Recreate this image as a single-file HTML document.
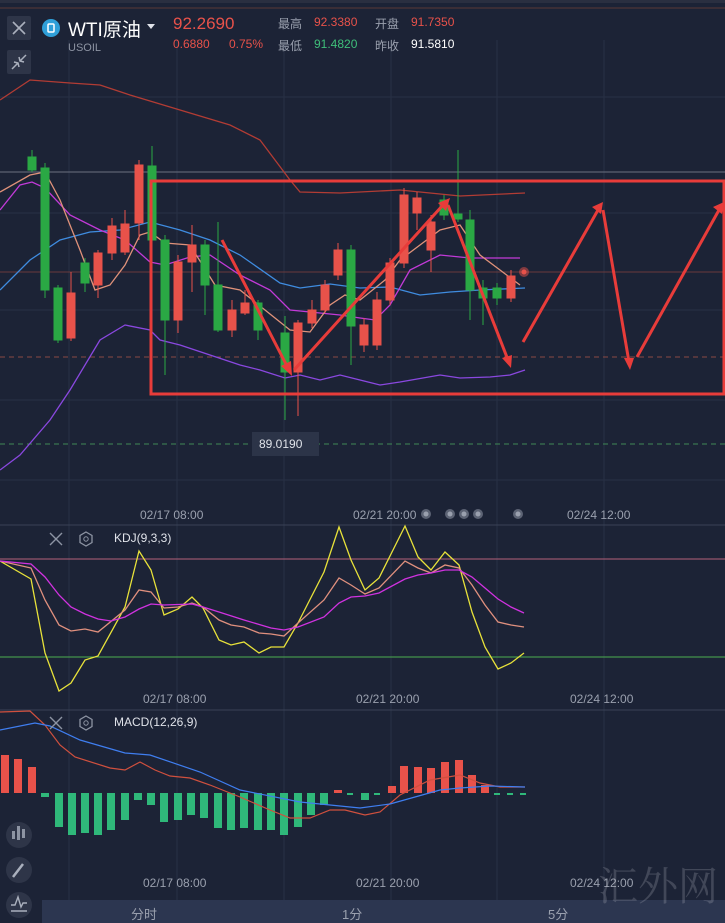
<!DOCTYPE html>
<html><head><meta charset="utf-8"><style>
html,body{margin:0;padding:0;background:#1c2336;width:725px;height:923px;overflow:hidden;font-family:"Liberation Sans","Noto Sans CJK SC",sans-serif}
.t{position:absolute;white-space:nowrap}
</style></head><body>
<svg width="725" height="923" style="position:absolute;left:0;top:0" xmlns="http://www.w3.org/2000/svg">
<rect width="725" height="923" fill="#1c2336"/>
<rect x="0" y="0" width="725" height="3" fill="#2a2f40"/>
<line x1="0" y1="8" x2="725" y2="8" stroke="#5a3a36" stroke-width="1"/>
<!-- grid -->
<g stroke="#283045" stroke-width="1">
<line x1="69" y1="40" x2="69" y2="900"/><line x1="177" y1="40" x2="177" y2="900"/><line x1="284" y1="40" x2="284" y2="900"/><line x1="391" y1="40" x2="391" y2="900"/><line x1="497" y1="40" x2="497" y2="900"/><line x1="604" y1="40" x2="604" y2="900"/>
<line x1="0" y1="97" x2="725" y2="97"/><line x1="0" y1="213" x2="725" y2="213"/><line x1="0" y1="310" x2="725" y2="310"/><line x1="0" y1="400" x2="725" y2="400"/><line x1="0" y1="480" x2="725" y2="480"/>
</g>
<line x1="0" y1="172" x2="725" y2="172" stroke="#6b7080" stroke-width="1"/>
<line x1="0" y1="272" x2="725" y2="272" stroke="#6a3a3c" stroke-width="1"/>
<line x1="0" y1="357" x2="725" y2="357" stroke="#8a4a44" stroke-width="1" stroke-dasharray="5,4"/>
<line x1="0" y1="444" x2="725" y2="444" stroke="#3f8a55" stroke-width="1" stroke-dasharray="5,4"/>
<line x1="0" y1="525" x2="725" y2="525" stroke="#3a4256"/>
<line x1="0" y1="710" x2="725" y2="710" stroke="#3a4256"/>
<!-- bands -->
<g fill="none" stroke-width="1.3">
<polyline stroke="#b23c34" points="0,100 30,80 70,83 100,85 130,95 180,110 230,125 260,140 290,180 300,192 340,193 400,190 460,196 525,193"/>
<polyline stroke="#8a48e0" points="0,470 20,455 50,420 70,390 100,340 125,325 150,330 160,340 180,345 210,355 240,365 260,370 285,378 300,375 320,380 340,375 360,380 380,385 400,382 440,375 460,378 490,377 510,375 525,370"/>
<polyline stroke="#3f8ce0" points="0,290 30,260 60,240 90,232 120,230 150,222 180,230 210,240 240,255 280,283 300,288 330,284 360,288 390,287 420,295 450,292 480,290 525,288"/>
<polyline stroke="#c23ad8" points="0,210 20,185 32,182 45,188 70,215 100,230 125,240 150,262 165,265 190,257 210,255 240,275 270,290 290,310 310,312 340,315 360,318 375,320 390,305 410,270 440,255 470,258 500,258 520,258"/>
<polyline stroke="#e0927a" points="0,192 30,175 45,172 60,200 80,250 95,290 110,285 125,265 140,235 150,232 165,243 190,245 215,285 240,290 265,310 290,330 310,332 330,305 345,295 360,300 385,280 400,260 420,245 440,230 460,225 480,255 500,270 520,285"/>
</g>
<!-- candles -->
<g stroke-width="1">
<g fill="#2aa844" stroke="#2aa844">
<line x1="32" y1="150" x2="32" y2="172"/><rect x="28" y="157" width="8" height="13"/>
<line x1="45" y1="163" x2="45" y2="298"/><rect x="41" y="168" width="8" height="122"/>
<line x1="58" y1="285" x2="58" y2="343"/><rect x="54" y="288" width="8" height="52"/>
<line x1="85" y1="258" x2="85" y2="292"/><rect x="81" y="263" width="8" height="20"/>
<line x1="152" y1="146" x2="152" y2="240"/><rect x="148" y="166" width="8" height="74"/>
<line x1="165" y1="235" x2="165" y2="375"/><rect x="161" y="240" width="8" height="80"/>
<line x1="205" y1="240" x2="205" y2="315"/><rect x="201" y="245" width="8" height="40"/>
<line x1="218" y1="222" x2="218" y2="332"/><rect x="214" y="285" width="8" height="45"/>
<line x1="258" y1="300" x2="258" y2="340"/><rect x="254" y="303" width="8" height="27"/>
<line x1="285" y1="316" x2="285" y2="420"/><rect x="281" y="333" width="8" height="39"/>
<line x1="351" y1="245" x2="351" y2="365"/><rect x="347" y="250" width="8" height="76"/>
<line x1="444" y1="195" x2="444" y2="220"/><rect x="440" y="200" width="8" height="15"/>
<line x1="458" y1="150" x2="458" y2="222"/><rect x="454" y="214" width="8" height="5"/>
<line x1="470" y1="210" x2="470" y2="320"/><rect x="466" y="220" width="8" height="70"/>
<line x1="483" y1="280" x2="483" y2="325"/><rect x="479" y="288" width="8" height="10"/>
<line x1="497" y1="283" x2="497" y2="305"/><rect x="493" y="288" width="8" height="10"/>
</g>
<g fill="#e8524a" stroke="#e8524a">
<line x1="71" y1="272" x2="71" y2="341"/><rect x="67" y="293" width="8" height="45"/>
<line x1="98" y1="250" x2="98" y2="298"/><rect x="94" y="253" width="8" height="32"/>
<line x1="112" y1="218" x2="112" y2="260"/><rect x="108" y="226" width="8" height="27"/>
<line x1="125" y1="210" x2="125" y2="255"/><rect x="121" y="224" width="8" height="28"/>
<line x1="139" y1="160" x2="139" y2="240"/><rect x="135" y="165" width="8" height="58"/>
<line x1="178" y1="255" x2="178" y2="333"/><rect x="174" y="262" width="8" height="58"/>
<line x1="192" y1="225" x2="192" y2="292"/><rect x="188" y="245" width="8" height="17"/>
<line x1="232" y1="300" x2="232" y2="337"/><rect x="228" y="310" width="8" height="20"/>
<line x1="245" y1="290" x2="245" y2="315"/><rect x="241" y="303" width="8" height="10"/>
<line x1="298" y1="320" x2="298" y2="416"/><rect x="294" y="323" width="8" height="49"/>
<line x1="312" y1="300" x2="312" y2="328"/><rect x="308" y="310" width="8" height="13"/>
<line x1="325" y1="280" x2="325" y2="313"/><rect x="321" y="285" width="8" height="25"/>
<line x1="338" y1="243" x2="338" y2="280"/><rect x="334" y="250" width="8" height="25"/>
<line x1="364" y1="318" x2="364" y2="352"/><rect x="360" y="325" width="8" height="20"/>
<line x1="377" y1="292" x2="377" y2="350"/><rect x="373" y="300" width="8" height="45"/>
<line x1="390" y1="258" x2="390" y2="305"/><rect x="386" y="263" width="8" height="37"/>
<line x1="404" y1="188" x2="404" y2="268"/><rect x="400" y="195" width="8" height="68"/>
<line x1="417" y1="192" x2="417" y2="230"/><rect x="413" y="198" width="8" height="15"/>
<line x1="431" y1="215" x2="431" y2="272"/><rect x="427" y="222" width="8" height="28"/>
<line x1="511" y1="270" x2="511" y2="302"/><rect x="507" y="276" width="8" height="22"/>
</g>
</g>
<circle cx="524" cy="272" r="5" fill="#e8524a" opacity="0.5"/><circle cx="524" cy="272" r="2.5" fill="#e8524a"/>
<!-- red box & arrows -->
<rect x="151" y="181" width="573" height="213" fill="none" stroke="#e83c3a" stroke-width="3"/>
<g stroke="#e83c3a" stroke-width="3" fill="none">
<line x1="222" y1="240" x2="288" y2="368"/>
<line x1="294" y1="370" x2="443" y2="205"/>
<line x1="448" y1="205" x2="508" y2="360"/>
<line x1="523" y1="342" x2="598" y2="210"/>
<line x1="603" y1="210" x2="629" y2="362"/>
<line x1="637" y1="357" x2="719" y2="210"/>
</g>
<g fill="#e83c3a">
<polygon points="292,376 281,366 291,361"/>
<polygon points="450,198 438,203 446,211"/>
<polygon points="511,368 502,358 512,355"/>
<polygon points="603,202 592,207 601,214"/>
<polygon points="630,370 624,358 634,358"/>
<polygon points="724,202 713,207 722,214"/>
</g>
<rect x="252" y="432" width="67" height="24" fill="#2c3448"/>
<!-- scroll dots -->
<g fill="#6d7384" opacity="0.8"><circle cx="426" cy="514" r="5"/><circle cx="450" cy="514" r="5"/><circle cx="464" cy="514" r="5"/><circle cx="478" cy="514" r="5"/><circle cx="518" cy="514" r="5"/></g>
<g fill="#9aa0ae"><circle cx="426" cy="514" r="2.5"/><circle cx="450" cy="514" r="2.5"/><circle cx="464" cy="514" r="2.5"/><circle cx="478" cy="514" r="2.5"/><circle cx="518" cy="514" r="2.5"/></g>
<!-- KDJ -->
<line x1="0" y1="559" x2="725" y2="559" stroke="#b4607a" stroke-width="1"/>
<line x1="0" y1="657" x2="725" y2="657" stroke="#4caf50" stroke-width="1"/>
<g fill="none" stroke-width="1.3">
<polyline stroke="#e8e23a" points="0,561 31,579 45,653 59,691 71,683 85,660 98,656 125,607 139,551 151,570 164,615 178,609 192,597 203,608 219,640 231,645 244,642 259,653 271,647 284,647 298,623 324,572 339,527 351,560 365,590 379,578 405,526 418,557 431,570 445,552 459,565 472,612 485,647 498,669 511,663 524,653"/>
<polyline stroke="#e0907e" points="0,561 31,568 45,600 59,625 71,631 85,629 98,632 125,610 139,590 151,592 164,608 178,607 192,603 203,607 219,620 231,625 244,627 259,633 271,634 284,636 298,623 324,600 339,578 351,585 365,594 379,588 405,561 418,568 431,573 445,565 459,568 472,585 485,605 498,622 511,625 524,627"/>
<polyline stroke="#d032e0" points="0,561 31,564 45,577 59,595 71,607 85,614 98,619 111,621 125,617 139,609 151,604 164,605 192,604 203,607 219,612 244,620 271,628 284,630 298,627 324,617 339,603 351,597 365,596 379,593 405,579 418,575 431,573 445,570 459,570 472,577 485,588 498,599 511,607 524,613"/>
</g>
<!-- MACD -->
<g fill="#e8524a">
<rect x="1" y="755" width="8" height="38"/><rect x="14" y="759" width="8" height="34"/><rect x="28" y="767" width="8" height="26"/>
<rect x="334" y="790" width="8" height="3"/>
<rect x="388" y="786" width="8" height="7"/><rect x="400" y="766" width="8" height="27"/><rect x="414" y="767" width="8" height="26"/><rect x="427" y="768" width="8" height="25"/><rect x="441" y="762" width="8" height="31"/><rect x="455" y="760" width="8" height="33"/><rect x="468" y="775" width="8" height="18"/><rect x="481" y="785" width="8" height="8"/>
</g>
<g fill="#2fb87a">
<rect x="41" y="793" width="8" height="4"/><rect x="55" y="793" width="8" height="34"/><rect x="68" y="793" width="8" height="42"/><rect x="81" y="793" width="8" height="40"/><rect x="94" y="793" width="8" height="42"/><rect x="107" y="793" width="8" height="37"/><rect x="121" y="793" width="8" height="27"/><rect x="134" y="793" width="8" height="7"/><rect x="147" y="793" width="8" height="12"/><rect x="160" y="793" width="8" height="29"/><rect x="174" y="793" width="8" height="27"/><rect x="187" y="793" width="8" height="22"/><rect x="200" y="793" width="8" height="25"/><rect x="214" y="793" width="8" height="35"/><rect x="227" y="793" width="8" height="37"/><rect x="240" y="793" width="8" height="35"/><rect x="254" y="793" width="8" height="37"/><rect x="267" y="793" width="8" height="37"/><rect x="280" y="793" width="8" height="42"/><rect x="294" y="793" width="8" height="34"/><rect x="307" y="793" width="8" height="22"/><rect x="320" y="793" width="8" height="12"/>
<rect x="347" y="793" width="6" height="2"/><rect x="361" y="793" width="8" height="7"/><rect x="374" y="793" width="6" height="2"/>
<rect x="494" y="793" width="6" height="2"/><rect x="507" y="793" width="6" height="2"/><rect x="520" y="793" width="6" height="2"/>
</g>
<g fill="none" stroke-width="1.2">
<polyline stroke="#d0503e" points="0,712 30,711 45,725 60,745 75,757 110,768 125,770 140,762 155,770 170,776 190,778 210,785 240,797 270,810 290,818 310,818 330,810 345,810 365,815 380,812 400,795 430,780 460,775 480,783 500,787 525,787"/>
<polyline stroke="#3f7ef0" points="0,730 35,723 50,726 80,740 125,753 150,755 200,772 240,790 300,802 330,805 360,808 390,804 440,790 460,788 490,786 525,787"/>
</g>
<!-- left tools -->
<rect x="7" y="16" width="24" height="24" rx="2" fill="#2e3548"/>
<path d="M13 22 L25 34 M25 22 L13 34" stroke="#aab0bd" stroke-width="1.6"/>
<rect x="7" y="50" width="24" height="24" rx="2" fill="#2e3548"/>
<path d="M12 69 L18 63 M14 62 L18 63 L19 67 M26 55 L20 61 M24 62 L20 61 L19 57" stroke="#aab0bd" stroke-width="1.5" fill="none"/>
<circle cx="19" cy="835" r="13" fill="#2e3548"/>
<g fill="#8d94a3"><rect x="12" y="831" width="3" height="8"/><rect x="17" y="826" width="3" height="14"/><rect x="22" y="829" width="3" height="9"/></g>
<circle cx="19" cy="870" r="13" fill="#2e3548"/>
<path d="M13 877 L23 864" stroke="#aab0bd" stroke-width="2.5"/>
<circle cx="19" cy="905" r="13" fill="#2e3548"/>
<path d="M11 905 L15 905 L18 897 L21 907 L23 903 L27 903 M11 911 L27 911" stroke="#aab0bd" stroke-width="1.4" fill="none"/>
<!-- bottom bar -->
<rect x="42" y="900" width="683" height="23" fill="#2c3650"/>
<!-- header icon -->
<circle cx="51" cy="28" r="9" fill="#2f9fd8"/>
<rect x="48" y="24" width="6" height="8" rx="1" fill="none" stroke="#fff" stroke-width="1.5"/>
<polygon points="147,24 155,24 151,29" fill="#e0e3ea"/>
<!-- KDJ/MACD icons -->
<path d="M50 533 L62 545 M62 533 L50 545" stroke="#8d94a3" stroke-width="1.4"/>
<polygon points="86,532 92,535.5 92,542.5 86,546 80,542.5 80,535.5" fill="none" stroke="#8d94a3" stroke-width="1.3"/><circle cx="86" cy="539" r="2.2" fill="none" stroke="#8d94a3"/>
<path d="M50 717 L62 729 M62 717 L50 729" stroke="#8d94a3" stroke-width="1.4"/>
<polygon points="86,716 92,719.5 92,726.5 86,730 80,726.5 80,719.5" fill="none" stroke="#8d94a3" stroke-width="1.3"/><circle cx="86" cy="723" r="2.2" fill="none" stroke="#8d94a3"/>
</svg>
<div class="t" style="left:68px;top:15px;font-size:19px;color:#fff">WTI原油</div>
<div class="t" style="left:68px;top:42px;font-size:11px;color:#8d94a3">USOIL</div>
<div class="t" style="left:173px;top:14px;font-size:17px;color:#e8524a">92.2690</div>
<div class="t" style="left:173px;top:37px;font-size:12px;color:#e8524a">0.6880</div>
<div class="t" style="left:229px;top:37px;font-size:12px;color:#e8524a">0.75%</div>
<div class="t" style="left:278px;top:15px;font-size:12px;color:#9aa0ae">最高</div>
<div class="t" style="left:314px;top:15px;font-size:12px;color:#e8524a">92.3380</div>
<div class="t" style="left:375px;top:15px;font-size:12px;color:#9aa0ae">开盘</div>
<div class="t" style="left:411px;top:15px;font-size:12px;color:#e8524a">91.7350</div>
<div class="t" style="left:278px;top:37px;font-size:12px;color:#9aa0ae">最低</div>
<div class="t" style="left:314px;top:37px;font-size:12px;color:#3fbf7a">91.4820</div>
<div class="t" style="left:375px;top:37px;font-size:12px;color:#9aa0ae">昨收</div>
<div class="t" style="left:411px;top:37px;font-size:12px;color:#fff">91.5810</div>
<div class="t" style="left:259px;top:437px;font-size:12px;color:#e0e3ea">89.0190</div>
<div class="t" style="left:140px;top:508px;font-size:12px;color:#9aa0ae">02/17 08:00</div>
<div class="t" style="left:353px;top:508px;font-size:12px;color:#9aa0ae">02/21 20:00</div>
<div class="t" style="left:567px;top:508px;font-size:12px;color:#9aa0ae">02/24 12:00</div>
<div class="t" style="left:114px;top:531px;font-size:12px;color:#e0e3ea">KDJ(9,3,3)</div>
<div class="t" style="left:143px;top:692px;font-size:12px;color:#9aa0ae">02/17 08:00</div>
<div class="t" style="left:356px;top:692px;font-size:12px;color:#9aa0ae">02/21 20:00</div>
<div class="t" style="left:570px;top:692px;font-size:12px;color:#9aa0ae">02/24 12:00</div>
<div class="t" style="left:114px;top:715px;font-size:12px;color:#e0e3ea">MACD(12,26,9)</div>
<div class="t" style="left:143px;top:876px;font-size:12px;color:#9aa0ae">02/17 08:00</div>
<div class="t" style="left:356px;top:876px;font-size:12px;color:#9aa0ae">02/21 20:00</div>
<div class="t" style="left:570px;top:876px;font-size:12px;color:#9aa0ae">02/24 12:00</div>
<div class="t" style="left:131px;top:904px;font-size:13px;color:#9aa0ae">分时</div>
<div class="t" style="left:342px;top:904px;font-size:13px;color:#9aa0ae">1分</div>
<div class="t" style="left:548px;top:904px;font-size:13px;color:#9aa0ae">5分</div>
<div class="t" style="left:598px;top:855px;font-size:40px;color:rgba(200,200,210,0.22);font-family:'Noto Serif CJK SC',serif">汇外网</div>
</body></html>
